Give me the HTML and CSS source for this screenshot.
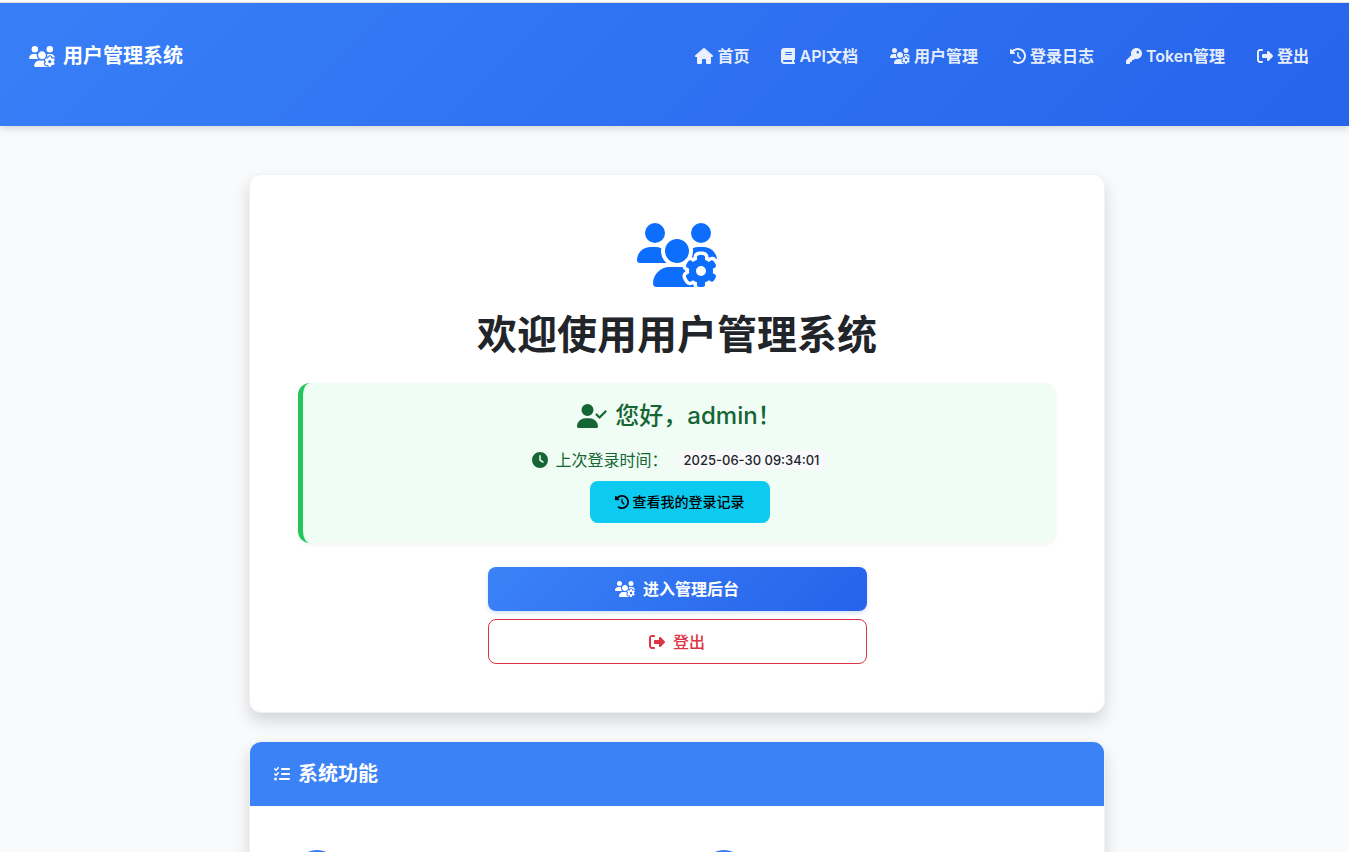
FILE: index.html
```html
<!DOCTYPE html>
<html lang="zh-CN">
<head>
<meta charset="UTF-8">
<meta name="viewport" content="width=device-width, initial-scale=1">
<title>用户管理系统</title>
<link rel="stylesheet" href="styles.css">
</head>
<body>
	<!-- 图标 -->
	<svg class="sprite" aria-hidden="true">
		<symbol id="users-gear" viewBox="0 0 640 512"><path d="M144 160A80 80 0 1 0 144 0a80 80 0 1 0 0 160zm368 0A80 80 0 1 0 512 0a80 80 0 1 0 0 160zM0 298.7C0 310.4 9.6 320 21.3 320H234.7c.2 0 .4 0 .7 0c-26.6-23.5-43.3-57.8-43.3-96c0-7.6 .7-15 1.9-22.3c-13.6-6.3-28.7-9.7-44.6-9.7H106.7C47.8 192 0 239.8 0 298.7zM320 320c24 0 45.9-8.8 62.7-23.3c2.5-3.7 5.2-7.3 8-10.7c2.7-3.3 5.7-6.1 9-8.3C410 262.3 416 243.9 416 224c0-53-43-96-96-96s-96 43-96 96s43 96 96 96zm65.4 60.2c-10.3-5.9-18.1-16.2-20.8-28.2H261.3C187.7 352 128 411.7 128 485.3c0 14.7 11.9 26.7 26.7 26.7H455.2c-2.1-5.2-3.2-10.9-3.2-16.4v-3c-1.3-.7-2.7-1.5-4-2.3l-2.6 1.5c-16.8 9.7-40.5 8-54.7-9.7c-4.5-5.6-8.6-11.5-12.4-17.6l-.1-.2-.1-.2-2.4-4.1-.1-.2-.1-.2c-3.4-6.2-6.4-12.6-9-19.3c-8.2-21.2 2.2-42.6 19-52.3l2.7-1.5c0-.8 0-1.5 0-2.3s0-1.5 0-2.3l-2.7-1.5zM533.3 192H490.7c-15.9 0-31 3.5-44.6 9.7c1.3 7.2 1.9 14.7 1.9 22.3c0 17.4-3.5 33.9-9.7 49c2.5 .9 4.9 2 7.1 3.3l2.6 1.5c1.3-.8 2.6-1.6 4-2.3v-3c0-19.4 13.3-39.1 35.8-42.6c7.9-1.2 16-1.9 24.2-1.9s16.3 .6 24.2 1.9c22.5 3.5 35.8 23.2 35.8 42.6v3c1.3 .7 2.7 1.5 4 2.3l2.6-1.5c16.8-9.7 40.5-8 54.7 9.7c2.3 2.8 4.5 5.8 6.6 8.7c-2.1-57.1-49-102.7-106.6-102.7zm91.3 163.9c6.3-3.6 9.5-11.1 6.8-18c-2.1-5.5-4.6-10.8-7.4-15.9l-2.3-4c-3.1-5.1-6.5-9.9-10.2-14.5c-4.6-5.7-12.7-6.7-19-3L574.4 311c-8.9-7.6-19.1-13.6-30.4-17.6v-21c0-7.3-4.9-13.8-12.1-14.9c-6.5-1-13.1-1.5-19.9-1.5s-13.4 .5-19.9 1.5c-7.2 1.1-12.1 7.6-12.1 14.9v21c-11.2 4-21.5 10-30.4 17.6l-18.2-10.5c-6.3-3.6-14.4-2.6-19 3c-3.7 4.6-7.1 9.5-10.2 14.6l-2.3 3.9c-2.8 5.1-5.3 10.4-7.4 15.9c-2.6 6.8 .5 14.3 6.8 17.9l18.2 10.5c-1 5.7-1.6 11.6-1.6 17.6s.6 11.9 1.6 17.5l-18.2 10.5c-6.3 3.6-9.5 11.1-6.8 17.9c2.1 5.5 4.6 10.7 7.4 15.8l2.4 4.1c3 5.1 6.4 9.9 10.1 14.5c4.6 5.7 12.7 6.7 19 3L449.6 457c8.9 7.6 19.2 13.6 30.4 17.6v21c0 7.3 4.9 13.8 12.1 14.9c6.5 1 13.1 1.5 19.9 1.5s13.4-.5 19.9-1.5c7.2-1.1 12.1-7.6 12.1-14.9v-21c11.2-4 21.5-10 30.4-17.6l18.2 10.5c6.3 3.6 14.4 2.6 19-3c3.7-4.6 7.1-9.4 10.1-14.5l2.4-4.2c2.8-5.1 5.3-10.3 7.4-15.8c2.6-6.8-.5-14.3-6.8-17.9l-18.2-10.5c1-5.7 1.6-11.6 1.6-17.5s-.6-11.9-1.6-17.6l18.2-10.5zM472 384a40 40 0 1 1 80 0 40 40 0 1 1 -80 0z"/></symbol>
		<symbol id="home" viewBox="0 0 576 512"><path d="M575.8 255.5c0 18-15 32.1-32 32.1h-32l.7 160.2c0 2.7-.2 5.4-.5 8.1V472c0 22.1-17.9 40-40 40H456c-1.1 0-2.2 0-3.3-.1c-1.4 .1-2.8 .1-4.2 .1H416 392c-22.1 0-40-17.9-40-40V448 384c0-17.7-14.3-32-32-32H256c-17.7 0-32 14.3-32 32v64 24c0 22.1-17.9 40-40 40H160 128.1c-1.5 0-3-.1-4.5-.2c-1.2 .1-2.4 .2-3.6 .2H104c-22.1 0-40-17.9-40-40V360c0-.9 0-1.9 .1-2.8V287.6H32c-18 0-32-14-32-32.1c0-9 3-17 10-24L266.4 8c7-7 15-8 22-8s15 2 21 7L564.8 231.5c8 7 12 15 11 24z"/></symbol>
		<symbol id="book" viewBox="0 0 448 512"><path d="M96 0C43 0 0 43 0 96V416c0 53 43 96 96 96H384h32c17.7 0 32-14.3 32-32s-14.3-32-32-32V384c17.7 0 32-14.3 32-32V32c0-17.7-14.3-32-32-32H384 96zm0 384H352v64H96c-17.7 0-32-14.3-32-32s14.3-32 32-32zm32-240c0-8.8 7.2-16 16-16H336c8.8 0 16 7.2 16 16s-7.2 16-16 16H144c-8.8 0-16-7.2-16-16zm16 48H336c8.8 0 16 7.2 16 16s-7.2 16-16 16H144c-8.8 0-16-7.2-16-16s7.2-16 16-16z"/></symbol>
		<symbol id="history" viewBox="0 0 512 512"><path d="M75 75L41 41C25.9 25.9 0 36.6 0 57.9V168c0 13.3 10.7 24 24 24H134.1c21.4 0 32.1-25.9 17-41l-30.8-30.8C155 85.5 203 64 256 64c106 0 192 86 192 192s-86 192-192 192c-40.8 0-78.6-12.7-109.7-34.4c-14.5-10.1-34.4-6.6-44.6 7.9s-6.6 34.4 7.9 44.6C151.2 495 201.7 512 256 512c141.4 0 256-114.6 256-256S397.4 0 256 0C185.3 0 121.3 28.7 75 75zm181 53c-13.3 0-24 10.7-24 24V256c0 6.4 2.5 12.5 7 17l72 72c9.4 9.4 24.6 9.4 33.9 0s9.4-24.6 0-33.9l-65-65V152c0-13.3-10.7-24-24-24z"/></symbol>
		<symbol id="key" viewBox="0 0 512 512"><path d="M336 352c97.2 0 176-78.8 176-176S433.2 0 336 0S160 78.8 160 176c0 18.7 2.9 36.8 8.3 53.7L7 391c-4.5 4.5-7 10.6-7 17v80c0 13.3 10.7 24 24 24h80c13.3 0 24-10.7 24-24V448h40c13.3 0 24-10.7 24-24V384h40c6.4 0 12.5-2.5 17-7l33.3-33.3c16.9 5.4 35 8.3 53.7 8.3zM376 96a40 40 0 1 1 0 80 40 40 0 1 1 0-80z"/></symbol>
		<symbol id="logout" viewBox="0 0 512 512"><path d="M377.9 105.9L500.7 228.7c7.2 7.2 11.3 17.1 11.3 27.3s-4.1 20.1-11.3 27.3L377.9 406.1c-6.4 6.4-15 9.9-24 9.9c-18.7 0-33.9-15.2-33.9-33.9l0-62.1-128 0c-17.7 0-32-14.3-32-32l0-64c0-17.7 14.3-32 32-32l128 0 0-62.1c0-18.7 15.2-33.9 33.9-33.9c9 0 17.6 3.6 24 9.9zM160 96L96 96c-17.7 0-32 14.3-32 32l0 256c0 17.7 14.3 32 32 32l64 0c17.7 0 32 14.3 32 32s-14.3 32-32 32l-64 0c-53 0-96-43-96-96L0 128C0 75 43 32 96 32l64 0c17.7 0 32 14.3 32 32s-14.3 32-32 32z"/></symbol>
		<symbol id="user-check" viewBox="0 0 640 512"><path d="M96 128a128 128 0 1 1 256 0A128 128 0 1 1 96 128zM0 482.3C0 383.8 79.8 304 178.3 304h91.4C368.2 304 448 383.8 448 482.3c0 16.4-13.3 29.7-29.7 29.7H29.7C13.3 512 0 498.7 0 482.3zM625 177L497 305c-9.4 9.4-24.6 9.4-33.9 0l-64-64c-9.4-9.4-9.4-24.6 0-33.9s24.6-9.4 33.9 0l47 47L591 143c9.4-9.4 24.6-9.4 33.9 0s9.4 24.6 0 33.9z"/></symbol>
		<symbol id="clock" viewBox="0 0 512 512"><path d="M256 0a256 256 0 1 1 0 512A256 256 0 1 1 256 0zM232 120V256c0 8 4 15.5 10.7 20l96 64c11 7.4 25.9 4.4 33.3-6.7s4.4-25.9-6.7-33.3L280 243.2V120c0-13.3-10.7-24-24-24s-24 10.7-24 24z"/></symbol>
		<symbol id="list-check" viewBox="0 0 512 512"><path d="M152.1 38.2c9.9 8.9 10.7 24 1.8 33.9l-72 80c-4.4 4.9-10.6 7.8-17.2 7.9s-12.9-2.4-17.6-7L7 113C-2.3 103.6-2.3 88.4 7 79s24.6-9.4 33.9 0l22.1 22.1 55.1-61.2c8.9-9.9 24-10.7 33.9-1.8zm0 160c9.9 8.9 10.7 24 1.8 33.9l-72 80c-4.4 4.9-10.6 7.8-17.2 7.9s-12.9-2.4-17.6-7L7 273c-9.4-9.4-9.4-24.6 0-33.9s24.6-9.4 33.9 0l22.1 22.1 55.1-61.2c8.9-9.9 24-10.7 33.9-1.8zM224 96c0-17.7 14.3-32 32-32H480c17.7 0 32 14.3 32 32s-14.3 32-32 32H256c-17.7 0-32-14.3-32-32zm0 160c0-17.7 14.3-32 32-32H480c17.7 0 32 14.3 32 32s-14.3 32-32 32H256c-17.7 0-32-14.3-32-32zM160 416c0-17.7 14.3-32 32-32H480c17.7 0 32 14.3 32 32s-14.3 32-32 32H192c-17.7 0-32-14.3-32-32zM48 368a48 48 0 1 1 0 96 48 48 0 1 1 0-96z"/></symbol>
	</svg>

	<header class="header">
		<div class="container navbar">
			<a class="brand" href="#"><svg class="icon icon-brand"><use href="#users-gear"/></svg>用户管理系统</a>
			<nav class="nav">
				<a href="#"><svg class="icon icon-home"><use href="#home"/></svg>首页</a>
				<a href="#"><svg class="icon icon-book"><use href="#book"/></svg>API文档</a>
				<a href="#"><svg class="icon icon-wide"><use href="#users-gear"/></svg>用户管理</a>
				<a href="#"><svg class="icon"><use href="#history"/></svg>登录日志</a>
				<a href="#"><svg class="icon"><use href="#key"/></svg>Token管理</a>
				<a href="#"><svg class="icon"><use href="#logout"/></svg>登出</a>
			</nav>
		</div>
	</header>

	<main class="container main">
		<section class="card welcome">
			<svg class="icon icon-hero"><use href="#users-gear"/></svg>
			<h1>欢迎使用用户管理系统</h1>
			<div class="greeting">
				<h2><svg class="icon icon-greet"><use href="#user-check"/></svg>您好，admin！</h2>
				<p><svg class="icon"><use href="#clock"/></svg>上次登录时间：<span class="badge">2025-06-30 09:34:01</span></p>
				<a class="btn btn-info" href="#"><svg class="icon icon-small"><use href="#history"/></svg>查看我的登录记录</a>
			</div>
			<div class="actions">
				<a class="btn btn-primary" href="#"><svg class="icon icon-wide"><use href="#users-gear"/></svg>进入管理后台</a>
				<a class="btn btn-danger" href="#"><svg class="icon"><use href="#logout"/></svg>登出</a>
			</div>
		</section>

		<section class="card">
			<h3 class="card-header"><svg class="icon"><use href="#list-check"/></svg>系统功能</h3>
			<div class="features">
				<div class="feature"><span class="feature-icon"></span></div>
				<div class="feature"><span class="feature-icon"></span></div>
			</div>
		</section>
	</main>
</body>
</html>
```
FILE: styles.css
```css
* {
	box-sizing: border-box;
}
body {
	margin: 0;
	height: 100vh;
	overflow: hidden;
	border-top: 2px solid #fff;
	background-color: #f9fafc;
	color: #212529;
	font-family: Inter, "Noto Sans CJK SC", sans-serif;
	font-size: 16px;
	line-height: 24px;
}
h1, h2, h3, p {
	margin: 0;
}
a {
	color: inherit;
	text-decoration: none;
}
.sprite {
	display: none;
}

/* 图标尺寸 */
.icon {
	flex: none;
	width: 16px;
	height: 16px;
	fill: currentColor;
}
.icon-brand {
	width: 26px;
	height: 21px;
}
.icon-home {
	width: 18px;
}
.icon-book {
	width: 14px;
}
.icon-wide {
	width: 20px;
}
.icon-small {
	width: 14px;
	height: 14px;
}
.icon-greet {
	width: 30px;
	height: 24px;
}
.icon-hero {
	width: 80px;
	height: 64px;
	color: #0d6efd;
}

.container {
	padding: 0 24px 0 29px;
}

/* 顶部导航 */
.header {
	padding: 32px 0 49px;
	border-top: 1px solid #dcdcdc;
	background: linear-gradient(135deg, #387ff7, #2664ec);
	box-shadow: 0 2px 8px rgba(0, 0, 0, .16);
	color: #fff;
}
.navbar {
	display: flex;
	align-items: center;
	justify-content: space-between;
	min-height: 42px;
}
.brand {
	display: flex;
	align-items: center;
	gap: 8px;
	font-size: 20px;
	font-weight: 700;
}
.nav {
	display: flex;
	gap: 32px;
	padding-right: 16px;
	color: rgba(255, 255, 255, .9);
	font-weight: 600;
}
.nav a {
	display: flex;
	align-items: center;
	gap: 4px;
}

.main {
	display: flex;
	flex-direction: column;
	align-items: center;
	gap: 28px;
	padding-top: 48px;
}
.card {
	width: 100%;
	max-width: 856px;
	border: 1px solid #f1f2f4;
	border-radius: 12px;
	background-color: #fff;
	box-shadow: 0 8px 16px rgba(0, 0, 0, .15);
}

/* 欢迎卡片 */
.welcome {
	display: flex;
	flex-direction: column;
	align-items: center;
	gap: 24px;
	padding: 48px;
}
.welcome h1 {
	font-size: 40px;
	line-height: 48px;
	font-weight: 700;
}
.greeting {
	display: flex;
	flex-direction: column;
	align-items: center;
	gap: 8px;
	width: 100%;
	padding: 16px 16px 20px;
	border-left: 5px solid #22c55e;
	border-radius: 12px;
	background-color: #f0fdf4;
	box-shadow: 0 2px 4px rgba(0, 0, 0, .05);
	color: #166534;
}
.greeting h2 {
	display: flex;
	align-items: center;
	gap: 8px;
	margin-bottom: 6px;
	font-size: 24px;
	line-height: 34px;
	font-weight: 500;
}
.greeting p {
	display: flex;
	align-items: center;
	gap: 8px;
	line-height: 26px;
}
.badge {
	padding: 0 8px;
	border-radius: 6px;
	background-color: #f8f9fa;
	color: #212529;
	font-size: 13px;
	line-height: 20px;
	font-weight: 500;
}

.btn {
	display: flex;
	align-items: center;
	justify-content: center;
	gap: 8px;
	padding: 10px 24px;
	border-radius: 8px;
	font-weight: 500;
}
.btn-info {
	gap: 4px;
	padding: 9px 25px;
	background-color: #0dcaf0;
	color: #000;
	font-size: 14px;
}
.actions {
	display: flex;
	flex-direction: column;
	gap: 8px;
	width: 50%;
}
.btn-primary {
	background: linear-gradient(135deg, #3b82f6, #2563eb);
	box-shadow: 0 2px 4px rgba(37, 99, 235, .2);
	color: #fff;
	font-weight: 600;
}
.btn-danger {
	min-height: 45px;
	padding: 9px 24px;
	border: 1px solid #dc3545;
	color: #dc3545;
}

/* 系统功能 */
.card-header {
	display: flex;
	align-items: center;
	gap: 8px;
	padding: 20px 24px;
	border-radius: 11px 11px 0 0;
	background-color: #3b82f6;
	color: #fff;
	font-size: 20px;
	font-weight: 600;
}
.features {
	display: grid;
	grid-template-columns: 1fr 1fr;
	gap: 24px;
	padding: 32px;
}
.feature {
	padding: 12px;
}
.feature-icon {
	display: block;
	width: 46px;
	height: 46px;
	border-radius: 50%;
	background: linear-gradient(135deg, #3b82f6, #2563eb);
}
```
